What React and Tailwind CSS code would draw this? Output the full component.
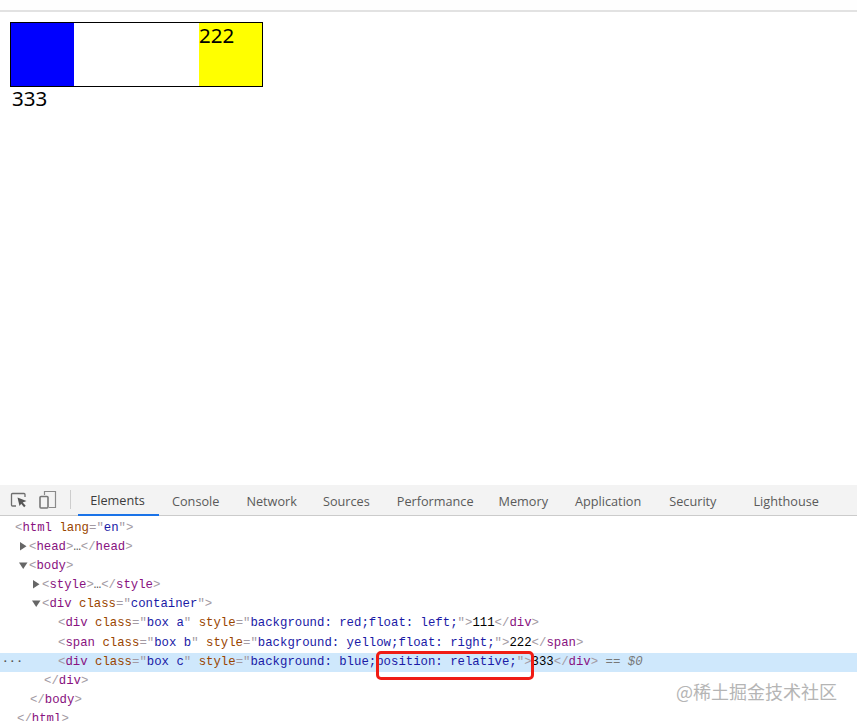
const B = ({ children }) => <span className="text-[#a39aa3]">{children}</span>;
const Tg = ({ children }) => <span className="text-[#881280]">{children}</span>;
const An = ({ children }) => <span className="text-[#994500]">{children}</span>;
const Av = ({ children }) => <span className="text-[#1a1aa6]">{children}</span>;
const Q = ({ children }) => <span className="text-[#a39aa3]">{children}</span>;

const Tri = ({ open }) => (
  <svg width="9" height="9" viewBox="0 0 9 9" className="inline-block align-[-1px] mr-[1px]">
    {open ? <path d="M0 1.5h8.5L4.2 8z" fill="#666" /> : <path d="M1 0v8.5L7.5 4.2z" fill="#666" />}
  </svg>
);

const Row = ({ pl, children, selected }) => (
  <div className={`h-[19.1px] leading-[19.1px] whitespace-pre ${selected ? "bg-[#cfe8fc]" : ""}`} style={{ paddingLeft: pl }}>
    {children}
  </div>
);

const tabs = [
  ["Elements", ""],
  ["Console", "ml-[13px]"],
  ["Network", "ml-[27px]"],
  ["Sources", "ml-[26px]"],
  ["Performance", "ml-[27px]"],
  ["Memory", "ml-[25px]"],
  ["Application", "ml-[27px]"],
  ["Security", "ml-[28px]"],
  ["Lighthouse", "ml-[37px]"],
];

export default function App() {
  return (
    <div className="relative w-[857px] h-[721px] overflow-hidden bg-white" style={{ fontFamily: '"Liberation Sans", sans-serif' }}>
      <div className="h-[12px] border-b-2 border-[#e2e2e2] bg-[#fefefe]" />
      <div className="h-[473px] pl-[10px] pt-[10px] font-['Noto_Sans','Open_Sans',sans-serif] text-[20.5px] leading-[27px] text-black">
        <div className="flex justify-between w-[253px] h-[65px] border border-black">
          <div className="w-[63px] bg-[#0000ff]" />
          <div className="w-[63px] bg-[#ffff00] leading-[25px]">222</div>
        </div>
        <div className="pl-[2px] -mt-[2px]">333</div>
      </div>

      <div className="flex items-stretch h-[31px] bg-[#f3f3f3] border-b border-[#cbcbcb]">
        <div className="flex items-center w-[71px] shrink-0 relative">
          <svg width="18" height="18" viewBox="0 0 18 18" className="ml-[10px]" fill="none">
            <path d="M6 15H2.5A1 1 0 0 1 1.5 14V3.5A1 1 0 0 1 2.5 2.5H14A1 1 0 0 1 15 3.5V6" stroke="#6e6e6e" strokeWidth="1.3" />
            <path d="M7.5 6.5l9 3.5-3.8 1.4 3 3.4-1.6 1.4-2.9-3.4L9.5 15z" fill="#555" />
          </svg>
          <svg width="18" height="20" viewBox="0 0 18 20" className="ml-[11px]" fill="none">
            <path d="M5.5 5V1.5H16.5V17.5H10" stroke="#8a8a8a" strokeWidth="1.2" />
            <rect x="1" y="6.5" width="8" height="11.5" rx="1" stroke="#777" strokeWidth="1.6" />
          </svg>
          <div className="absolute right-0 top-[5px] h-[19px] w-px bg-[#cdcdcd]" />
        </div>
        <div className="flex items-stretch text-[#5a5a5a] text-[12.7px] font-['Open_Sans',sans-serif] whitespace-nowrap">
          {tabs.map(([t, m], i) =>
            i === 0 ? (
              <div key={t} className="w-[81px] ml-[7px] pt-[3px] pr-[2px] flex items-center justify-center border-b-2 border-[#1a73e8] -mb-px text-[#3c3c3c]">
                {t}
              </div>
            ) : (
              <div key={t} className={`flex items-center pt-[3px] ${m}`}>{t}</div>
            )
          )}
        </div>
      </div>

      <div className="pt-[3px] font-['Liberation_Mono',monospace] text-[12.33px] text-[#881280]">
        <Row pl={15}><B>&lt;</B><Tg>html</Tg> <An>lang</An><Q>="</Q><Av>en</Av><Q>"</Q><B>&gt;</B></Row>
        <Row pl={19}><Tri /><B>&lt;</B><Tg>head</Tg><B>&gt;</B><span className="text-[#555]">…</span><B>&lt;/</B><Tg>head</Tg><B>&gt;</B></Row>
        <Row pl={19}><Tri open /><B>&lt;</B><Tg>body</Tg><B>&gt;</B></Row>
        <Row pl={32}><Tri /><B>&lt;</B><Tg>style</Tg><B>&gt;</B><span className="text-[#555]">…</span><B>&lt;/</B><Tg>style</Tg><B>&gt;</B></Row>
        <Row pl={32}><Tri open /><B>&lt;</B><Tg>div</Tg> <An>class</An><Q>="</Q><Av>container</Av><Q>"</Q><B>&gt;</B></Row>
        <Row pl={58}><B>&lt;</B><Tg>div</Tg> <An>class</An><Q>="</Q><Av>box a</Av><Q>"</Q> <An>style</An><Q>="</Q><Av>background: red;float: left;</Av><Q>"</Q><B>&gt;</B><span className="text-black">111</span><B>&lt;/</B><Tg>div</Tg><B>&gt;</B></Row>
        <Row pl={58}><B>&lt;</B><Tg>span</Tg> <An>class</An><Q>="</Q><Av>box b</Av><Q>"</Q> <An>style</An><Q>="</Q><Av>background: yellow;float: right;</Av><Q>"</Q><B>&gt;</B><span className="text-black">222</span><B>&lt;/</B><Tg>span</Tg><B>&gt;</B></Row>
        <div className="relative">
          <Row pl={58} selected><B>&lt;</B><Tg>div</Tg> <An>class</An><Q>="</Q><Av>box c</Av><Q>"</Q> <An>style</An><Q>="</Q><Av>background: blue;position: relative;</Av><Q>"</Q><B>&gt;</B><span className="text-black">333</span><B>&lt;/</B><Tg>div</Tg><B>&gt;</B><span className="text-[#777]"> == <i>$0</i></span></Row>
          <span className="absolute left-[2px] top-0 leading-[17px] text-[#555] text-[11px] font-bold tracking-[0.5px]">···</span>
        </div>
        <Row pl={44}><B>&lt;/</B><Tg>div</Tg><B>&gt;</B></Row>
        <Row pl={30}><B>&lt;/</B><Tg>body</Tg><B>&gt;</B></Row>
        <Row pl={17}><B>&lt;/</B><Tg>html</Tg><B>&gt;</B></Row>
      </div>

      <div className="absolute left-[376px] top-[651px] w-[158px] h-[29px] border-[3px] border-[#f01c14] rounded-[5px]" />
      <div className="absolute left-[676px] top-[680px] text-[18px] leading-[22px] text-[#b5b5b5] whitespace-nowrap font-['Noto_Sans_CJK_SC',sans-serif]">@稀土掘金技术社区</div>
    </div>
  );
}
